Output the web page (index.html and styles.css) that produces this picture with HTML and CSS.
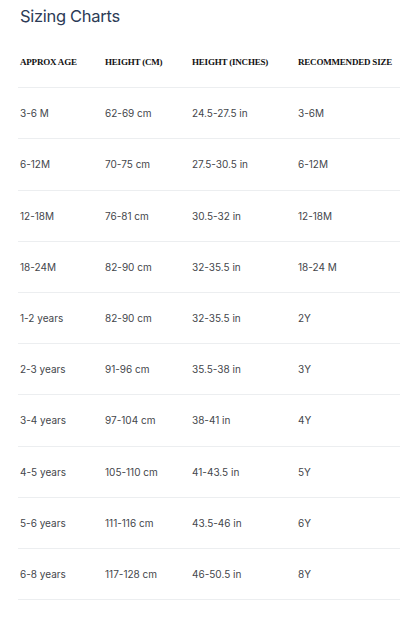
FILE: index.html
```html
<!DOCTYPE html>
<html>
<head>
<meta charset="utf-8">
<link rel="stylesheet" href="styles.css">
</head>
<body>
<h1 class="title">Sizing Charts</h1>
<div class="table">
  <div class="row head"><span>APPROX AGE</span><span>HEIGHT (CM)</span><span>HEIGHT (INCHES)</span><span>RECOMMENDED SIZE</span></div>
  <div class="row"><span>3-6 M</span><span>62-69 cm</span><span>24.5-27.5 in</span><span>3-6M</span></div>
  <div class="row"><span>6-12M</span><span>70-75 cm</span><span>27.5-30.5 in</span><span>6-12M</span></div>
  <div class="row"><span>12-18M</span><span>76-81 cm</span><span>30.5-32 in</span><span>12-18M</span></div>
  <div class="row"><span>18-24M</span><span>82-90 cm</span><span>32-35.5 in</span><span>18-24 M</span></div>
  <div class="row"><span>1-2 years</span><span>82-90 cm</span><span>32-35.5 in</span><span>2Y</span></div>
  <div class="row"><span>2-3 years</span><span>91-96 cm</span><span>35.5-38 in</span><span>3Y</span></div>
  <div class="row"><span>3-4 years</span><span>97-104 cm</span><span>38-41 in</span><span>4Y</span></div>
  <div class="row"><span>4-5 years</span><span>105-110 cm</span><span>41-43.5 in</span><span>5Y</span></div>
  <div class="row"><span>5-6 years</span><span>111-116 cm</span><span>43.5-46 in</span><span>6Y</span></div>
  <div class="row"><span>6-8 years</span><span>117-128 cm</span><span>46-50.5 in</span><span>8Y</span></div>
</div>
</body>
</html>
```
FILE: styles.css
```css
html, body {
  margin: 0;
  padding: 0;
  background: #ffffff;
}
.title {
  margin: 5px 0 10px 20px;
  font-family: "Inter", "DejaVu Sans", sans-serif;
  font-weight: normal;
  font-size: 16.5px;
  line-height: 22px;
  color: #2c3b56;
  letter-spacing: -0.3px;
}
.table {
  margin-left: 18px;
}
.row {
  display: grid;
  grid-template-columns: 85px 87px 106px 1fr;
  align-items: center;
  height: 50.2px;
  border-bottom: 1px solid #eceef0;
  padding-left: 2px;
  font-family: "Inter", "DejaVu Sans", sans-serif;
  font-size: 10px;
  color: #44464b;
}
.row.head {
  font-family: "Liberation Serif", serif;
  font-weight: bold;
  font-size: 9px;
  color: #111;
  letter-spacing: -0.2px;
}
```
